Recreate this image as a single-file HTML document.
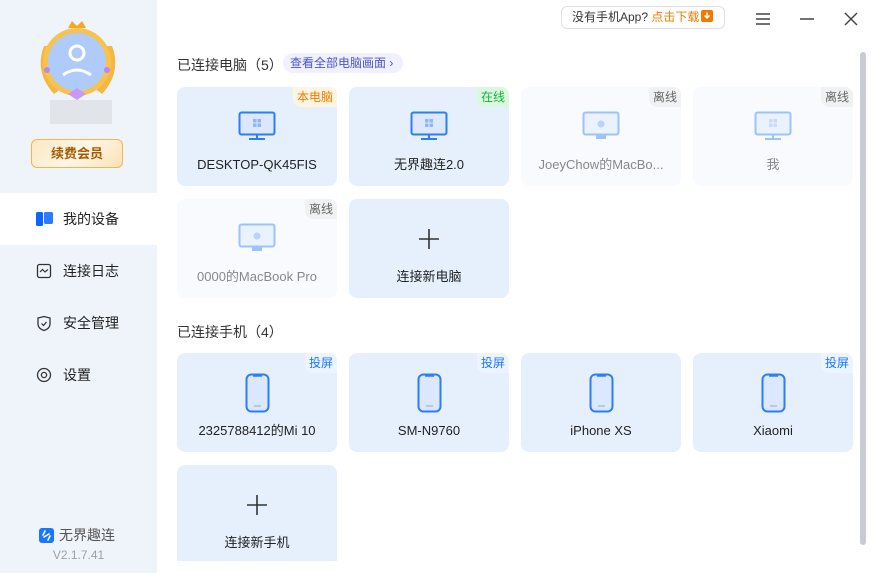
<!DOCTYPE html>
<html><head><meta charset="utf-8"><style>
*{margin:0;padding:0;box-sizing:border-box}
body{width:874px;height:573px;overflow:hidden;font-family:"Liberation Sans","Noto Sans CJK SC",sans-serif;background:#fff;position:relative}
.side{position:absolute;left:0;top:0;width:157px;height:573px;background:#eef4fa}
.nav{position:absolute;left:0;width:157px;height:52px;display:flex;align-items:center;font-size:14px;color:#222}
.nav svg{position:absolute;left:36px}
.nav span{position:absolute;left:63px}
.card{position:absolute;width:160px;height:99px;border-radius:8px;background:#e6f0fd;overflow:hidden}
.card.off{background:#f8fafe}
.card .nm{position:absolute;left:0;right:0;top:69px;height:18px;line-height:18px;text-align:center;font-size:13px;color:#222}
.card.off .nm{color:#888}
.tag{position:absolute;right:0;top:0;font-size:12px;padding:1px 4px 2px;border-bottom-left-radius:8px}
.ic{position:absolute;left:61px;top:24px}
.title{position:absolute;left:177px;font-size:14px;color:#333}
</style></head><body>
<div class="side">
  <svg style="position:absolute;left:36px;top:20px" width="84" height="82" viewBox="0 0 84 82">
    <path d="M8 26 Q-2 52 18 74 L28 66 Q12 50 18 26Z" fill="#f5b642"/>
    <path d="M76 26 Q86 52 66 74 L56 66 Q72 50 66 26Z" fill="#f5b642"/>
    <circle cx="41" cy="42" r="34" fill="#f7c350"/>
    <circle cx="41" cy="42" r="29" fill="#aecbfa"/>
    <circle cx="41" cy="33" r="7" fill="none" stroke="#fff" stroke-width="3"/>
    <path d="M27 55 Q41 45 55 55" fill="none" stroke="#fff" stroke-width="3"/>
    <path d="M32 8 L36 1 L41 6 L46 1 L50 8Z" fill="#f6a623"/>
    <path d="M32 74 L41 68 L50 74 L41 80Z" fill="#c89af5"/>
    <circle cx="11" cy="50" r="3" fill="#b988f2"/><circle cx="71" cy="50" r="3" fill="#b988f2"/>
  </svg>
  <div style="position:absolute;left:50px;top:100px;width:62px;height:24px;background:#dde0e4;opacity:.8"></div>
  <div style="position:absolute;left:31px;top:139px;width:92px;height:29px;border:1px solid #f3b64a;border-radius:6px;background:linear-gradient(135deg,#fbe7c2,#fff6e6,#fbe2b8);color:#a35a00;font-size:13px;font-weight:bold;text-align:center;line-height:27px">续费会员</div>
  <div class="nav" style="top:193px;background:#fff">
    <svg width="18" height="16" viewBox="0 0 18 16"><rect x="0" y="1" width="7" height="14" rx="1.5" fill="#0a66ff"/><rect x="8" y="1" width="9" height="12" rx="1.5" fill="#2f7bff"/></svg>
    <span>我的设备</span></div>
  <div class="nav" style="top:245px"><svg width="16" height="16" viewBox="0 0 16 16"><rect x="1.5" y="1.5" width="13" height="13" rx="2" fill="none" stroke="#333" stroke-width="1.3"/><path d="M4 9 L6.5 6.5 L9 9 L12 6.5" fill="none" stroke="#333" stroke-width="1.2"/></svg><span>连接日志</span></div>
  <div class="nav" style="top:297px"><svg width="16" height="17" viewBox="0 0 16 17"><path d="M2 3 L8 1.5 L14 3 L14 9 Q14 13.5 8 15.5 Q2 13.5 2 9Z" fill="none" stroke="#333" stroke-width="1.3"/><path d="M5.5 8.5 L7.5 10.5 L10.5 7" fill="none" stroke="#333" stroke-width="1.2"/></svg><span>安全管理</span></div>
  <div class="nav" style="top:349px"><svg width="16" height="16" viewBox="0 0 16 16"><circle cx="8" cy="8" r="6.5" fill="none" stroke="#333" stroke-width="1.3"/><circle cx="8" cy="8" r="2.6" fill="none" stroke="#333" stroke-width="1.3"/></svg><span>设置</span></div>
  <div style="position:absolute;left:39px;top:525px;display:flex;align-items:center;font-size:14px;color:#555">
    <svg width="15" height="15" viewBox="0 0 15 15"><rect width="15" height="15" rx="3" fill="#1677ff"/><path d="M6 3 L4 7 M11 8 L9 12 M5 9 L10 6" stroke="#fff" stroke-width="1.6" stroke-linecap="round"/></svg>
    <span style="margin-left:5px">无界趣连</span></div>
  <div style="position:absolute;left:0;width:157px;top:548px;text-align:center;font-size:12px;color:#9aa0a8">V2.1.7.41</div>
</div>

<div style="position:absolute;left:561px;top:6px;width:164px;height:23px;border:1px solid #dde0e4;border-radius:6px;font-size:12px;color:#333;line-height:21px;padding-left:10px">没有手机App? <span style="color:#f07a00">点击下载</span><span style="display:inline-block;width:12px;height:12px;background:#f07a00;border-radius:2px;vertical-align:-1px;margin-left:2px;position:relative"><svg width="12" height="12" viewBox="0 0 12 12" style="position:absolute;left:0;top:0"><path d="M6 2.5 V8 M3.5 5.5 L6 8 L8.5 5.5" stroke="#fff" stroke-width="1.5" fill="none"/></svg></span></div>
<svg style="position:absolute;left:755px;top:12px" width="16" height="14"><path d="M1 2H15M1 7H15M1 12H15" stroke="#444" stroke-width="1.5"/></svg>
<svg style="position:absolute;left:799px;top:12px" width="16" height="14"><path d="M1 7H15" stroke="#444" stroke-width="1.5"/></svg>
<svg style="position:absolute;left:843px;top:11px" width="16" height="16"><path d="M2 2L14 14M14 2L2 14" stroke="#444" stroke-width="1.5"/></svg>
<div style="position:absolute;left:860px;top:52px;width:6px;height:493px;background:#c8ccd2;border-radius:3px"></div>

<div class="title" style="top:55px">已连接电脑（5）</div>
<div style="position:absolute;left:283px;top:53px;width:120px;height:20px;border-radius:10px;background:#f0f0ff;color:#4a55c9;font-size:12px;line-height:20px;padding-left:7px">查看全部电脑画面 ›</div>

<div class="card" style="left:177px;top:87px"><div class="tag" style="background:#fff4e0;color:#f07a00">本电脑</div>
<svg class="ic" width="38" height="30" viewBox="0 0 38 30"><rect x="1.5" y="1.5" width="35" height="22" rx="2" fill="#dbe8ff" stroke="#2e7cf6" stroke-width="2"/><rect x="15" y="8" width="3.5" height="3.5" fill="#8fb6f5"/><rect x="19.5" y="8" width="3.5" height="3.5" fill="#8fb6f5"/><rect x="15" y="12.5" width="3.5" height="3.5" fill="#8fb6f5"/><rect x="19.5" y="12.5" width="3.5" height="3.5" fill="#8fb6f5"/><path d="M19 24V28M11 28H27" stroke="#2e7cf6" stroke-width="2"/></svg>
<div class="nm">DESKTOP-QK45FIS</div></div>
<div class="card" style="left:349px;top:87px"><div class="tag" style="background:#dcf7e0;color:#13b33a">在线</div>
<svg class="ic" width="38" height="30" viewBox="0 0 38 30"><rect x="1.5" y="1.5" width="35" height="22" rx="2" fill="#dbe8ff" stroke="#2e7cf6" stroke-width="2"/><rect x="15" y="8" width="3.5" height="3.5" fill="#8fb6f5"/><rect x="19.5" y="8" width="3.5" height="3.5" fill="#8fb6f5"/><rect x="15" y="12.5" width="3.5" height="3.5" fill="#8fb6f5"/><rect x="19.5" y="12.5" width="3.5" height="3.5" fill="#8fb6f5"/><path d="M19 24V28M11 28H27" stroke="#2e7cf6" stroke-width="2"/></svg>
<div class="nm">无界趣连2.0</div></div>
<div class="card off" style="left:521px;top:87px"><div class="tag" style="background:#f0f1f3;color:#666">离线</div>
<svg class="ic" width="38" height="30" viewBox="0 0 38 30"><rect x="1.5" y="1.5" width="35" height="22" rx="2" fill="#eaf1ff" stroke="#9dc3fb" stroke-width="2"/><circle cx="19" cy="13" r="3.5" fill="#b9d3fb"/><rect x="14" y="24" width="10" height="4" fill="#9dc3fb"/></svg>
<div class="nm">JoeyChow的MacBo...</div></div>
<div class="card off" style="left:693px;top:87px"><div class="tag" style="background:#f0f1f3;color:#666">离线</div>
<svg class="ic" width="38" height="30" viewBox="0 0 38 30"><rect x="1.5" y="1.5" width="35" height="22" rx="2" fill="#eaf1ff" stroke="#9dc3fb" stroke-width="2"/><rect x="15" y="8" width="3.5" height="3.5" fill="#c7dcfb"/><rect x="19.5" y="8" width="3.5" height="3.5" fill="#c7dcfb"/><rect x="15" y="12.5" width="3.5" height="3.5" fill="#c7dcfb"/><rect x="19.5" y="12.5" width="3.5" height="3.5" fill="#c7dcfb"/><path d="M19 24V28M11 28H27" stroke="#9dc3fb" stroke-width="2"/></svg>
<div class="nm">我</div></div>
<div class="card off" style="left:177px;top:199px"><div class="tag" style="background:#f0f1f3;color:#666">离线</div>
<svg class="ic" width="38" height="30" viewBox="0 0 38 30"><rect x="1.5" y="1.5" width="35" height="22" rx="2" fill="#eaf1ff" stroke="#9dc3fb" stroke-width="2"/><circle cx="19" cy="13" r="3.5" fill="#b9d3fb"/><rect x="14" y="24" width="10" height="4" fill="#9dc3fb"/></svg>
<div class="nm">0000的MacBook Pro</div></div>
<div class="card" style="left:349px;top:199px">
<svg style="position:absolute;left:70px;top:30px" width="20" height="20"><path d="M10 0V20M0 10H20" stroke="#333" stroke-width="1.6"/></svg>
<div class="nm">连接新电脑</div></div>

<div class="title" style="top:322px">已连接手机（4）</div>
<div class="card" style="left:177px;top:353px"><div class="tag" style="background:#eef4ff;color:#1677ff">投屏</div>
<svg style="position:absolute;left:68px;top:20px" width="25" height="40" viewBox="0 0 25 40"><rect x="1.5" y="1.5" width="22" height="37" rx="5" fill="#dbe8ff" stroke="#2e7cf6" stroke-width="2"/><path d="M8 2.5H17" stroke="#2e7cf6" stroke-width="2.5"/><path d="M9 33H16" stroke="#8fb6f5" stroke-width="1.2"/></svg>
<div class="nm">2325788412的Mi 10</div></div>
<div class="card" style="left:349px;top:353px"><div class="tag" style="background:#eef4ff;color:#1677ff">投屏</div>
<svg style="position:absolute;left:68px;top:20px" width="25" height="40" viewBox="0 0 25 40"><rect x="1.5" y="1.5" width="22" height="37" rx="5" fill="#dbe8ff" stroke="#2e7cf6" stroke-width="2"/><path d="M8 2.5H17" stroke="#2e7cf6" stroke-width="2.5"/><path d="M9 33H16" stroke="#8fb6f5" stroke-width="1.2"/></svg>
<div class="nm">SM-N9760</div></div>
<div class="card" style="left:521px;top:353px">
<svg style="position:absolute;left:68px;top:20px" width="25" height="40" viewBox="0 0 25 40"><rect x="1.5" y="1.5" width="22" height="37" rx="5" fill="#dbe8ff" stroke="#2e7cf6" stroke-width="2"/><path d="M8 2.5H17" stroke="#2e7cf6" stroke-width="2.5"/><path d="M9 33H16" stroke="#8fb6f5" stroke-width="1.2"/></svg>
<div class="nm">iPhone XS</div></div>
<div class="card" style="left:693px;top:353px"><div class="tag" style="background:#eef4ff;color:#1677ff">投屏</div>
<svg style="position:absolute;left:68px;top:20px" width="25" height="40" viewBox="0 0 25 40"><rect x="1.5" y="1.5" width="22" height="37" rx="5" fill="#dbe8ff" stroke="#2e7cf6" stroke-width="2"/><path d="M8 2.5H17" stroke="#2e7cf6" stroke-width="2.5"/><path d="M9 33H16" stroke="#8fb6f5" stroke-width="1.2"/></svg>
<div class="nm">Xiaomi</div></div>
<div class="card" style="left:177px;top:465px;height:96px;border-bottom-left-radius:0;border-bottom-right-radius:0">
<svg style="position:absolute;left:70px;top:30px" width="20" height="20"><path d="M10 0V20M0 10H20" stroke="#333" stroke-width="1.6"/></svg>
<div class="nm">连接新手机</div></div>
</body></html>
